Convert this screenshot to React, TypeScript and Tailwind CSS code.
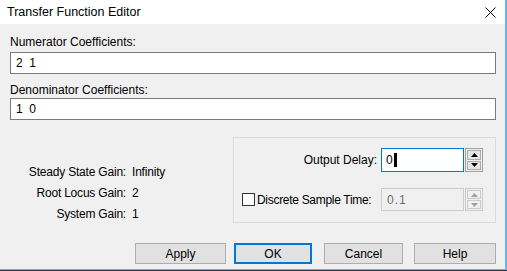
import React from "react";

const ui = { fontFamily: '"Liberation Sans", Arial, sans-serif' };

const Spinner = ({ disabled }: { disabled?: boolean }) => {
  const arrow = disabled ? "#a0a0a0" : "#000000";
  const border = disabled ? "border-[#cccccc]" : "border-[#adadad]";
  return (
    <div
      className={`ml-[1px] flex h-full w-[18px] flex-col gap-[1px] border p-[1px] ${
        disabled ? "border-[#cccccc]" : "border-[#a0a0a0]"
      }`}
    >
      <div
        className={`flex flex-1 items-center justify-center border ${border} ${
          disabled ? "bg-[#f0f0f0]" : "bg-[#e5e5e5]"
        }`}
      >
        <svg width="7" height="4" viewBox="0 0 7 4">
          <path d="M3.5 0 L7 4 L0 4 Z" fill={arrow} />
        </svg>
      </div>
      <div
        className={`flex flex-1 items-center justify-center border ${border} ${
          disabled ? "bg-[#f0f0f0]" : "bg-[#e5e5e5]"
        }`}
      >
        <svg width="7" height="4" viewBox="0 0 7 4">
          <path d="M0 0 L7 0 L3.5 4 Z" fill={arrow} />
        </svg>
      </div>
    </div>
  );
};

const Button = ({
  label,
  width,
  primary,
}: {
  label: string;
  width: string;
  primary?: boolean;
}) => (
  <button
    className={`flex h-[21px] items-center justify-center bg-[#e1e1e1] text-[12px] text-black ${width} ${
      primary ? "border-2 border-[#0078d7]" : "border border-[#adadad]"
    }`}
  >
    {label}
  </button>
);

export default function App() {
  return (
    <div
      className="flex h-[271px] w-[507px] flex-col overflow-hidden bg-[#f0f0f0] text-[12px] text-black"
      style={ui}
    >
      <div className="flex flex-1 flex-col border-r-2 border-b border-[#6fb1e8]">
        {/* title bar */}
        <div className="flex h-[24px] items-center justify-between bg-white pl-[7px] pr-[9px]">
          <span className="text-[12.5px]">Transfer Function Editor</span>
          <svg width="11" height="11" viewBox="0 0 11 11">
            <path d="M0.5 0.5 L10.5 10.5 M10.5 0.5 L0.5 10.5" stroke="#000" strokeWidth="1" />
          </svg>
        </div>

        <div className="flex flex-1 flex-col pl-[10px] pr-[9px] pt-[10px]">
          <div className="h-[16px] leading-[16px]">Numerator Coefficients:</div>
          <div className="mt-[2px] flex h-[22px] items-center whitespace-pre border border-[#7a7a7a] bg-white pl-[5px]">
            2  1
          </div>

          <div className="mt-[8px] h-[16px] leading-[16px]">Denominator Coefficients:</div>
          <div className="flex h-[22px] items-center whitespace-pre border border-[#7a7a7a] bg-white pl-[5px]">
            1  0
          </div>

          <div className="mt-[17px] flex">
            <div className="w-[223px] pt-[25px]">
              {[
                ["Steady State Gain:", "Infinity"],
                ["Root Locus Gain:", "2"],
                ["System Gain:", "1"],
              ].map(([k, v]) => (
                <div key={k} className="flex leading-[21px] tracking-[-0.2px]">
                  <span className="w-[116px] text-right">{k}</span>
                  <span className="ml-[6px]">{v}</span>
                </div>
              ))}
            </div>

            <div className="flex h-[86px] flex-1 flex-col border border-[#dcdcdc] pl-[8px] pr-[12px] pt-[10px]">
              <div className="flex h-[24px] items-stretch">
                <span className="flex flex-1 items-center justify-end pr-[4px]">Output Delay:</span>
                <div className="flex w-[83px] items-center border border-[#0078d7] bg-white pl-[4px]">
                  <span>0</span>
                  <span className="ml-[1px] h-[14px] w-[3px] bg-black" />
                </div>
                <Spinner />
              </div>

              <div className="mt-[16px] flex h-[23px] items-stretch">
                <div className="flex flex-1 items-center">
                  <span className="h-[13px] w-[13px] border border-[#333333] bg-white" />
                  <span className="ml-[2px] tracking-[-0.3px]">Discrete Sample Time:</span>
                </div>
                <div className="flex w-[83px] items-center border border-[#cccccc] bg-[#f0f0f0] pl-[5px] tracking-[1px] text-[#6d6d6d]">
                  0.1
                </div>
                <Spinner disabled />
              </div>
            </div>
          </div>

          <div className="mt-[18px] flex">
            <div className="ml-[125px]">
              <Button label="Apply" width="w-[91px]" />
            </div>
            <div className="ml-[8px]">
              <Button label="OK" width="w-[78px]" primary />
            </div>
            <div className="ml-[12px]">
              <Button label="Cancel" width="w-[79px]" />
            </div>
            <div className="ml-[11px]">
              <Button label="Help" width="w-[82px]" />
            </div>
          </div>
        </div>
      </div>
      <div className="h-[1px] bg-[#2b3540]" />
    </div>
  );
}
